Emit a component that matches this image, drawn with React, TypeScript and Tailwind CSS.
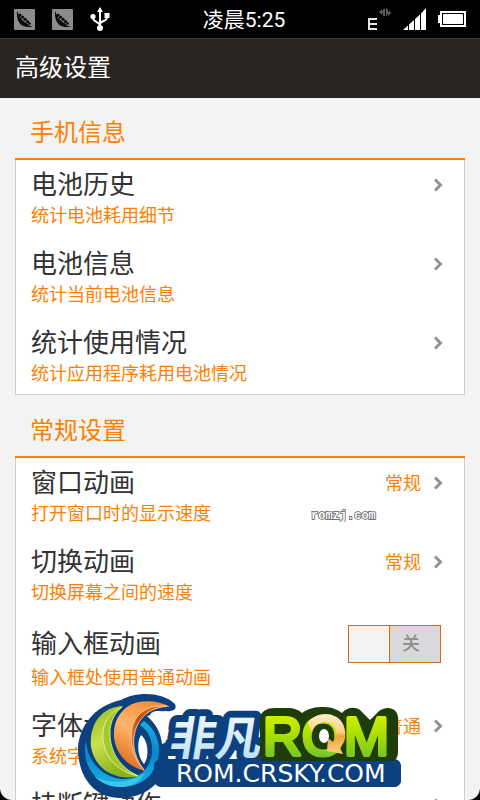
import { useState } from "react";

type Item = { title: string; note: string; value?: string; toggle?: boolean };
type Group = { name: string; items: Item[] };

const groups: Group[] = [
  {
    name: "手机信息",
    items: [
      { title: "电池历史", note: "统计电池耗用细节" },
      { title: "电池信息", note: "统计当前电池信息" },
      { title: "统计使用情况", note: "统计应用程序耗用电池情况" },
    ],
  },
  {
    name: "常规设置",
    items: [
      { title: "窗口动画", note: "打开窗口时的显示速度", value: "常规" },
      { title: "切换动画", note: "切换屏幕之间的速度", value: "常规" },
      { title: "输入框动画", note: "输入框处使用普通动画", toggle: true },
      { title: "字体大小", note: "系统字体大小", value: "普通" },
      { title: "挂断键动作", note: "按下挂断键时的动作" },
    ],
  },
];

function PodIcon() {
  return (
    <svg className="size-[21px]" viewBox="0 0 21 21" aria-hidden="true">
      <rect width="21" height="21" rx="1" fill="#8c8c8c" />
      <path d="M3 2C2.500 8 4 16.500 12 17.800C14.500 18.200 17 17.800 19 17.500C17 16.800 15 17 13 16C8 13.500 5 10 4 4Z" fill="#050505" />
      <g fill="#050505">
        <circle cx="6" cy="6" r="1.500" />
        <circle cx="8.500" cy="8" r="1.600" />
        <circle cx="11" cy="10.300" r="1.600" />
        <circle cx="13.500" cy="12.500" r="1.600" />
        <circle cx="15.500" cy="14.500" r="1.300" />
      </g>
      <path d="M4.500 6C6 11 9.500 14 14 16" fill="none" stroke="#050505" strokeWidth="1.500" />
    </svg>
  );
}

function UsbIcon() {
  return (
    <svg className="h-6 w-5" viewBox="0 0 20 24" aria-hidden="true">
      <g fill="none" stroke="#fff" strokeWidth="2">
        <path d="M10 4V20" />
        <path d="M3 9V11C3 15 10 15 10 18.500" />
        <path d="M17 8V10.500C17 14.500 10 14 10 17" />
      </g>
      <path d="M10 0L13 5H7Z" fill="#fff" />
      <circle cx="3" cy="9.500" r="2.600" fill="#fff" />
      <rect x="14.500" y="6" width="5" height="5" fill="#fff" />
      <circle cx="10" cy="21" r="3" fill="#fff" />
    </svg>
  );
}

function StatusBar() {
  return (
    <div className="grid h-[38px] shrink-0 grid-cols-[1fr_auto_1fr] items-center bg-black pr-[6px] pl-[14px] text-white">
      <div className="flex items-center gap-[17px]">
        <PodIcon />
        <PodIcon />
        <UsbIcon />
      </div>
      <time className="pt-[2px] text-[21px] leading-[36px]">凌晨5:25</time>
      <div className="mr-2 flex items-center justify-end gap-[11px]">
        <svg className="h-[22px] w-6" viewBox="0 0 24 22" role="img" aria-label="EDGE">
          <path d="M0 10H9V12H2V15H9V17H2V20H9V22H0Z" fill="#e4e4e4" />
          <path d="M11 4L14 1V3H15V1H17V8H15V5H14V7ZM23 5L20 8V6H19V8H18V1H20V4H21V2Z" fill="#5c5c5c" />
        </svg>
        <svg className="h-[22px] w-6" viewBox="0 0 24 22" aria-hidden="true">
          <path d="M0 22L5 17.500V22ZM6 16.500L11 12V22H6ZM12 11L17 6.500V22H12ZM18 5.500L23 0V22H18Z" fill="#fff" />
        </svg>
        <svg className="h-4 w-7" viewBox="0 0 28 16" aria-hidden="true">
          <path d="M2 0H28V16H2V12H0V4H2ZM4 2V14H26V2Z" fill="#fff" fillRule="evenodd" />
          <rect x="5" y="3" width="20" height="10" rx="1" fill="#fff" />
        </svg>
      </div>
    </div>
  );
}

function Chevron() {
  return (
    <svg className="h-[14px] w-[10px]" viewBox="0 0 10 14" aria-hidden="true">
      <path d="M2 1.500L7.500 7L2 12.500" fill="none" stroke="#929292" strokeWidth="3" />
    </svg>
  );
}

function Note({ text }: { text: string }) {
  return <span className="block text-[18px] leading-7 text-[#ff8000]">{text}</span>;
}

function LinkRow({ item }: { item: Item }) {
  return (
    <button type="button" className="block w-full pr-[21px] pl-[15px] text-left">
      <span className="flex items-center">
        <span className="flex-1 text-[26px] leading-[34px]">{item.title}</span>
        {item.value && <span className="mr-[12px] text-[18px] text-[#ff8000]">{item.value}</span>}
        <Chevron />
      </span>
      <Note text={item.note} />
    </button>
  );
}

function ToggleRow({ item }: { item: Item }) {
  const [on, setOn] = useState(false);
  return (
    <label className="block pr-[23px] pl-[15px]">
      <span className="flex items-center">
        <span className="flex-1 text-[26px] leading-10">{item.title}</span>
        <input type="checkbox" role="switch" className="peer sr-only" checked={on} onChange={() => setOn(!on)} />
        <span className="flex h-[38px] w-[93px] border border-[#d9680f] bg-[#dbd8db] peer-checked:flex-row-reverse">
          <span className="w-[41px] border-r border-[#d9680f] bg-[#f3f3f3]" />
          <span className="flex-1 pr-2 text-center text-[18px] leading-9 font-medium text-[#8b8e8b]">{on ? "开" : "关"}</span>
        </span>
      </span>
      <Note text={item.note} />
    </label>
  );
}

function Logo() {
  return (
    <svg className="h-[108px] w-[326px]" viewBox="78 692 326 108" role="img" aria-label="非凡ROM">
      <defs>
        <linearGradient id="lime" x1="0" y1="0" x2="0.4" y2="1">
          <stop offset="0" stopColor="#8fb81e" />
          <stop offset="0.5" stopColor="#cbe14c" />
          <stop offset="1" stopColor="#86b21c" />
        </linearGradient>
        <linearGradient id="orange" x1="0.8" y1="0" x2="0.4" y2="1">
          <stop offset="0" stopColor="#f08a32" />
          <stop offset="0.5" stopColor="#ffb56c" />
          <stop offset="1" stopColor="#e0701e" />
        </linearGradient>
        <linearGradient id="rust" x1="1" y1="0" x2="0" y2="1">
          <stop offset="0" stopColor="#e88436" />
          <stop offset="0.5" stopColor="#c2500c" />
          <stop offset="1" stopColor="#f0a05a" />
        </linearGradient>
        <linearGradient id="sea" x1="0" y1="0" x2="0" y2="1">
          <stop offset="0" stopColor="#12b2e6" />
          <stop offset="0.5" stopColor="#0a86cc" />
          <stop offset="1" stopColor="#17b5e6" />
        </linearGradient>
        <linearGradient id="ice" x1="0" y1="0" x2="0" y2="1">
          <stop offset="0" stopColor="#ffffff" />
          <stop offset="1" stopColor="#b4dcf5" />
        </linearGradient>
        <linearGradient id="green" gradientUnits="userSpaceOnUse" x1="0" y1="714" x2="0" y2="758">
          <stop offset="0" stopColor="#d4f000" />
          <stop offset="0.5" stopColor="#a8de00" />
          <stop offset="1" stopColor="#72c42c" />
        </linearGradient>
        <linearGradient id="gold" x1="0" y1="0" x2="0" y2="1">
          <stop offset="0" stopColor="#fff0cc" />
          <stop offset="0.45" stopColor="#f9cf80" />
          <stop offset="0.55" stopColor="#eda536" />
          <stop offset="1" stopColor="#f9cf80" />
        </linearGradient>
      </defs>

      <path d="M79 748C80 728 94 706 122 700C138 691 164 692 176 704C179 711 171 712 160 711C154 711 151 713 151 716C158 722 163 731 166 741L170 762C162 784 146 798 121 798C96 798 79 778 79 748Z" fill="#0c407f" />
      <path d="M148 716L168 711L168 742L163 744C162 732 156 723 148 716Z" fill="#fff" />
      <path d="M87 740C88 762 104 777 122 779C139 780 151 770 153 753C154 741 150 731 141 725L145 721C155 728 161 740 160 753C158 774 143 787 122 787C97 786 82 766 87 740Z" fill="url(#sea)" />
      <path d="M95 776C108 784 131 784 146 773C137 790 110 792 95 776Z" fill="#3cc4ee" />
      <path d="M124 706C101 707 90 726 92 747C96 769 116 782 141 776C121 768 109 753 109 733C109 721 115 712 124 706Z" fill="url(#lime)" />
      <path d="M123 707C109 713 103 724 104 739C106 758 119 772 139 776C122 768 111 753 111 733C111 721 116 713 123 707Z" fill="#a3c92c" stroke="#eef5a0" strokeWidth="0.8" />
      <path d="M171 707C159 700 140 699 128 707C112 719 111 742 123 757C129 764 137 769 146 771C133 758 130 740 137 725C143 712 156 706 171 707Z" fill="url(#orange)" />
      <path d="M168 706C149 704 137 713 133 728C130 744 135 760 145 770C134 756 132 740 138 726C144 713 154 708 168 706Z" fill="url(#rust)" stroke="#ffd2a0" strokeWidth="0.8" />
      <path d="M142 735C150 741 150 758 145 764C139 758 137 743 142 735Z" fill="#fff" />

      <rect x="155" y="759" width="247" height="28" rx="7" fill="#0c407f" />
      <g transform="translate(169 755) skewX(-9)">
        <text x="0" y="0" fill="url(#ice)" stroke="#0c407f" strokeWidth="14" strokeLinejoin="round" paintOrder="stroke" fontFamily="'Noto Sans CJK SC', sans-serif" fontSize="46" fontWeight="700">非凡</text>
      </g>
      <path d="M261 720C261 711 268 708 276 708H288C295 708 300 710 303 713C310 708 316 707 325 707C333 707 339 710 343 713C347 708 355 706 361 710L371 720L380 711C388 705 399 708 399 718V752C399 760 394 763 387 763H269C264 763 261 760 261 754Z" fill="#1f3d0a" />
      <text x="264" y="755" fill="url(#green)" stroke="url(#green)" strokeWidth="4" strokeLinejoin="round" fontFamily="'Liberation Sans', Arial, sans-serif" fontSize="54">ROM</text>
      <ellipse cx="325" cy="736" rx="5" ry="7" fill="#fff" />
      <path d="M309 723C317 711 337 711 344 724C348 734 347 741 341 748L344 754L328 751L329 738L334 742C340 733 336 722 326 722C319 722 314 727 313 733Z" fill="url(#gold)" />
      <rect x="240" y="761" width="162" height="26" rx="7" fill="#0c407f" />
      <text x="177" y="782" fill="#fff" fontFamily="'DejaVu Sans', sans-serif" fontSize="25">ROM.CRSKY.COM</text>
    </svg>
  );
}

export default function App() {
  return (
    <div className="h-screen overflow-hidden bg-black font-[Roboto,'Noto_Sans_CJK_SC',sans-serif]">
      <div className="relative flex h-full flex-col overflow-hidden">
        <StatusBar />
        <header className="h-[60px] shrink-0 border-t border-[#443b35] bg-[#2a2522] px-[15px]">
          <h1 className="text-[24px] leading-[58px] text-white">高级设置</h1>
        </header>
        <main className="flex min-h-0 flex-1 flex-col gap-[11px] overflow-hidden rounded-b-[12px] bg-[#f3f3f3] px-[15px] pt-[10px] text-[#333]">
          {groups.map((group) => (
            <section key={group.name} className="shrink-0">
              <h2 className="px-[15px] text-[24px] leading-[50px] text-[#ff8000]">{group.name}</h2>
              <div className="border-t-2 border-[#ff8000]">
                <div className="flex flex-col gap-[17px] border-x border-b border-[#cfcfcf] bg-white pt-2 pb-[6px]">
                  {group.items.map((item) =>
                    item.toggle ? <ToggleRow key={item.title} item={item} /> : <LinkRow key={item.title} item={item} />,
                  )}
                </div>
              </div>
            </section>
          ))}
        </main>
        <svg className="absolute top-[506px] right-[102px] h-4 w-[68px]" viewBox="0 0 68 16" role="img" aria-label="romzj.com">
          <text x="1" y="13" fontFamily="'Liberation Mono', monospace" fontSize="12" fontWeight="700" fill="#fff" stroke="#555" strokeWidth="1.5" paintOrder="stroke">romzj.com</text>
        </svg>
        <div className="pointer-events-none absolute inset-x-0 bottom-0 flex justify-center">
          <Logo />
        </div>
      </div>
    </div>
  );
}
